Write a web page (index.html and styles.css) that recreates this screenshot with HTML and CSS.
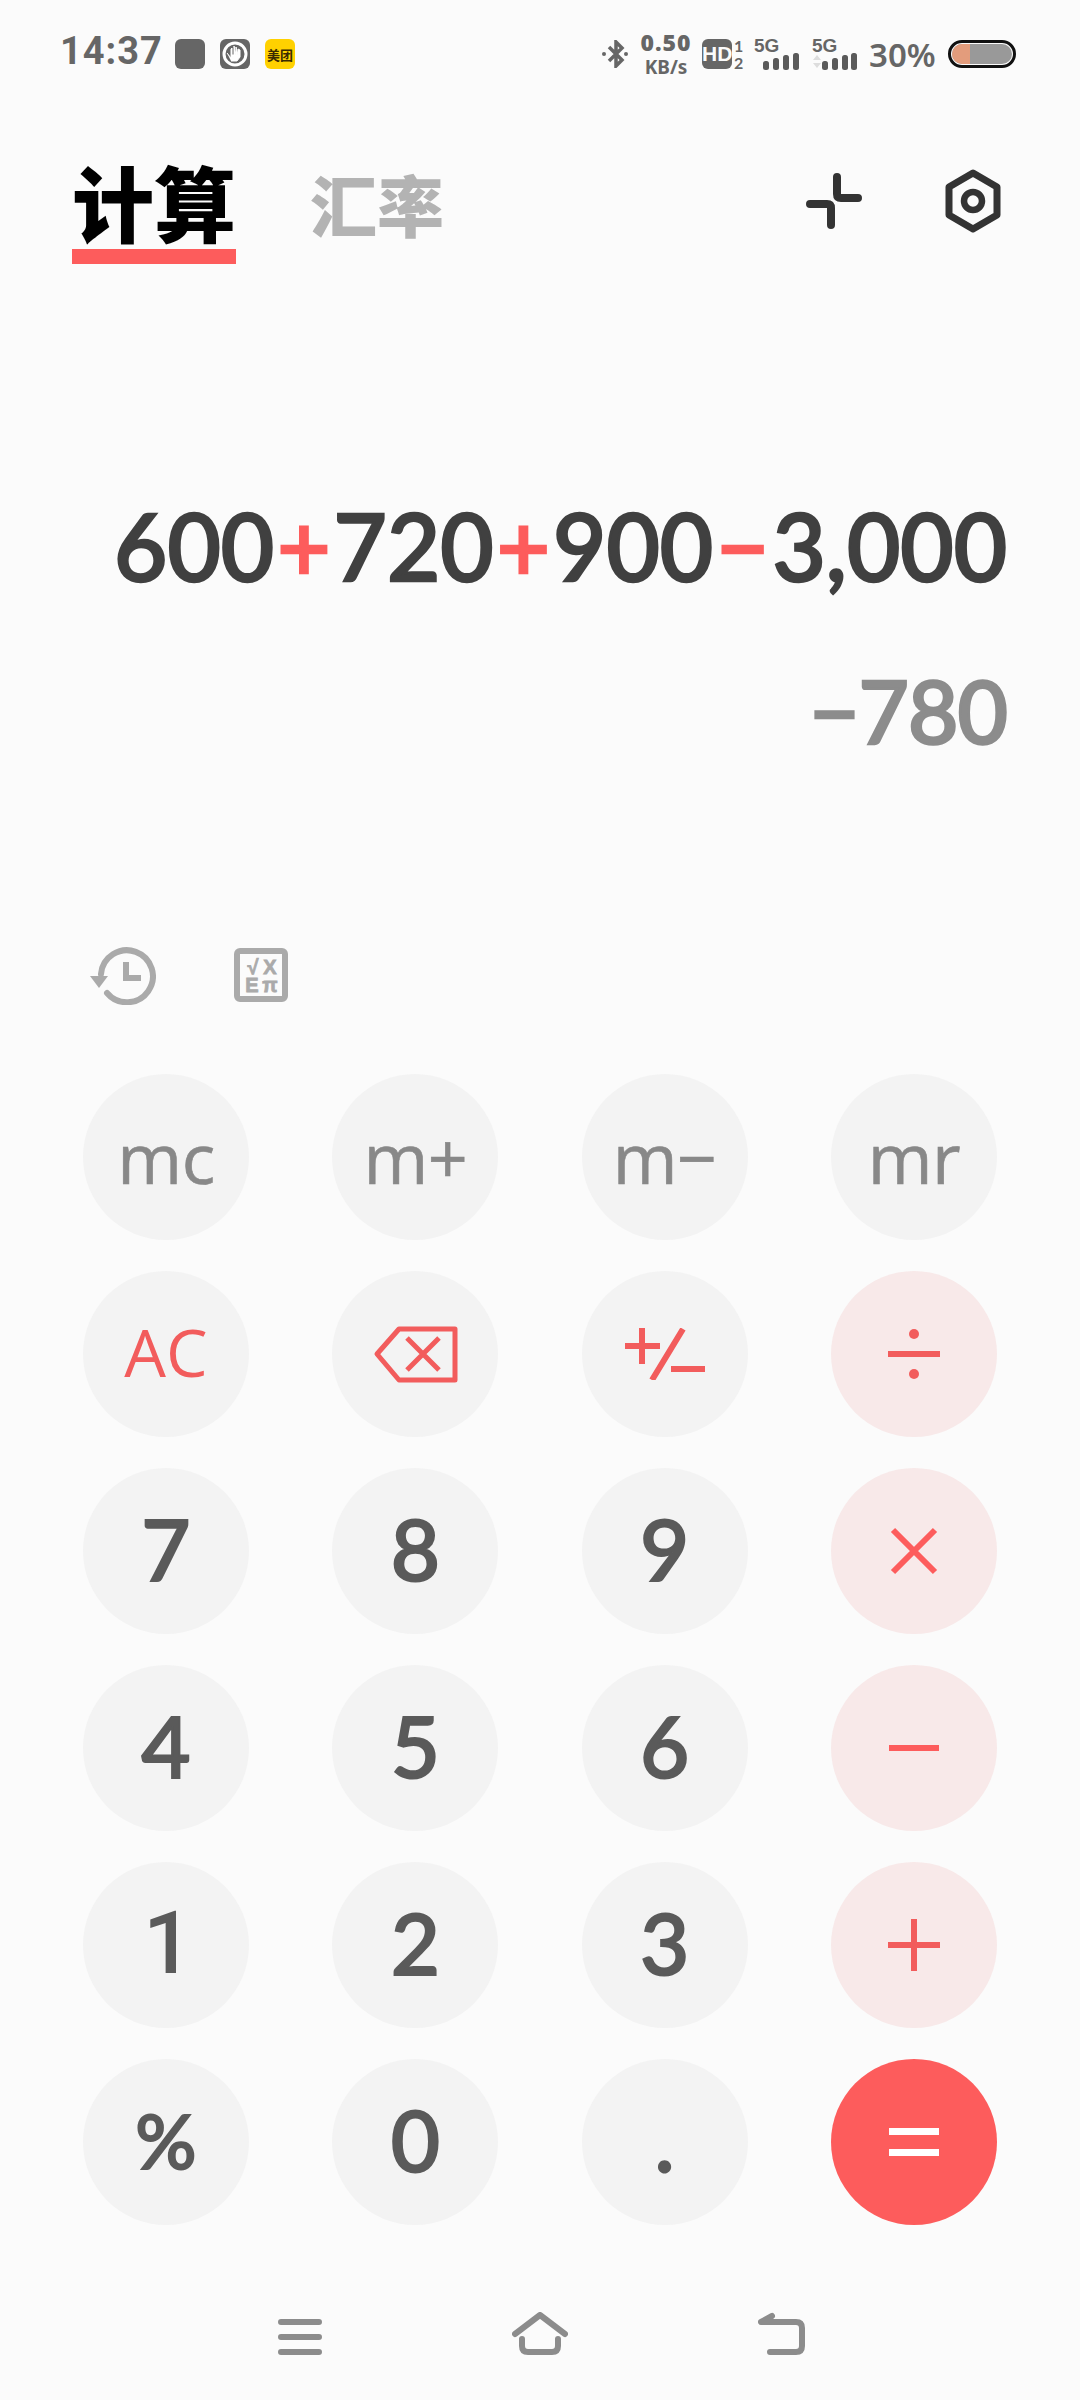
FILE: index.html
```html
<!DOCTYPE html>
<html lang="zh">
<head>
  <meta charset="UTF-8">
  <meta name="viewport" content="width=device-width, initial-scale=1.0">
  <title>计算器</title>
  <link rel="stylesheet" href="styles.css">
</head>
<body>
  <div class="status">
    <span class="time">14:37</span>
    <span class="app-icon gray"></span>
    <span class="app-icon gray">
      <svg viewBox="0 0 30 30" width="30" height="30"><circle cx="15" cy="15" r="11" fill="none" stroke="#fff" stroke-width="3"/><path d="M7 14l4 5V10l1-1v7l2 0V7l2 9V8l2 8V10l2 1v7l-3 4h-6" fill="#fff" stroke="#fff" stroke-width="1"/></svg>
    </span>
    <span class="app-icon yellow">美团</span>
    <span class="status-right">
      <svg class="bt" viewBox="0 0 26 28" width="26" height="28"><path d="M7 7l13 13-6 6V2l6 6L7 21" fill="none" stroke="#666" stroke-width="3.500"/><circle cx="2" cy="14" r="2" fill="#666"/><circle cx="24" cy="14" r="2" fill="#666"/></svg>
      <span class="speed"><b>0.50</b><i>KB/s</i></span>
      <span class="hd">HD</span>
      <span class="sim"><i>1</i><i>2</i></span>
      <span class="net">
        <span class="net-label">5G</span>
        <svg viewBox="0 0 36 17" width="36" height="17"><rect x="0" y="8" width="6" height="9" rx="2.5"/><rect x="10" y="5" width="6" height="12" rx="2.5"/><rect x="20" y="2" width="6" height="15" rx="2.5"/><rect x="30" y="0" width="6" height="17" rx="2.5"/></svg>
      </span>
      <span class="net net-two">
        <span class="net-label">5G</span>
        <svg viewBox="0 0 44 17" width="44" height="17"><path d="M0 7l4-5 4 5zM0 10l4 5 4-5z" fill="#ddd"/><rect x="9" y="8" width="6" height="9" rx="2.5"/><rect x="19" y="5" width="6" height="12" rx="2.5"/><rect x="29" y="2" width="6" height="15" rx="2.5"/><rect x="38" y="0" width="6" height="17" rx="2.5"/></svg>
      </span>
      <span class="percent">30%</span>
      <span class="battery"><span class="battery-in"><span class="battery-level"></span></span></span>
    </span>
  </div>

  <div class="header">
    <div class="tab active">计算</div>
    <div class="tab">汇率</div>
    <svg class="head-icon plus-icon" viewBox="0 0 56 56" width="56" height="56"><path d="M31 4V21Q31 25 35 25H52M4 31H21Q25 31 25 35V52" fill="none" stroke="#333" stroke-width="8" stroke-linecap="round"/></svg>
    <svg class="head-icon" viewBox="0 0 56 64" width="56" height="64"><path d="M28 4L52 18V46L28 60L4 46V18Z" fill="none" stroke="#333" stroke-width="7" stroke-linejoin="round"/><circle cx="28" cy="32" r="9" fill="none" stroke="#333" stroke-width="6.500"/></svg>
  </div>

  <div class="display">
    <div class="expr">600<span class="op">+</span>720<span class="op">+</span>900<span class="op">−</span>3,000</div>
    <div class="result">−780</div>
  </div>

  <div class="tools">
    <svg viewBox="0 0 66 60" width="66" height="60"><path d="M11 29A26 26 0 1 1 17 48" fill="none" stroke="#aaa" stroke-width="6" stroke-linecap="round"/><path d="M0 31H18L9 43Z" fill="#aaa"/><path d="M36 17V33H51" fill="none" stroke="#aaa" stroke-width="6"/></svg>
    <svg class="sci" viewBox="0 0 54 54" width="54" height="54"><rect x="3" y="3" width="48" height="48" rx="3" fill="none" stroke="#aaa" stroke-width="6"/><text x="19" y="26" class="sci-text">√</text><text x="36" y="26" class="sci-text">X</text><text x="18" y="44" class="sci-text">E</text><text x="36" y="44" class="sci-text">π</text></svg>
  </div>

  <div class="keypad">
    <div class="key mem">mc</div>
    <div class="key mem">m+</div>
    <div class="key mem">m−</div>
    <div class="key mem">mr</div>

    <div class="key red-text">AC</div>
    <div class="key"><svg viewBox="0 0 85 57" width="85" height="57"><path d="M26 3H82V54H26L4 28Z" fill="none" stroke="#f25c5c" stroke-width="5" stroke-linejoin="round"/><path d="M34 12L66 44M66 12L34 44" stroke="#f25c5c" stroke-width="5"/></svg></div>
    <div class="key"><svg viewBox="0 0 80 52" width="80" height="52"><path d="M0 18H35M17 0V36M58 1L27 52M46 41H80" fill="none" stroke="#f25c5c" stroke-width="6"/></svg></div>
    <div class="key op-key"><svg viewBox="0 0 52 52" width="52" height="52"><path d="M0 26H52" stroke="#f25c5c" stroke-width="6"/><circle cx="26" cy="6" r="5" fill="#f25c5c"/><circle cx="26" cy="46" r="5" fill="#f25c5c"/></svg></div>

    <div class="key">7</div>
    <div class="key">8</div>
    <div class="key">9</div>
    <div class="key op-key"><svg viewBox="0 0 48 48" width="48" height="48"><path d="M3 3L45 45M45 3L3 45" stroke="#fd5c5c" stroke-width="6"/></svg></div>

    <div class="key">4</div>
    <div class="key">5</div>
    <div class="key">6</div>
    <div class="key op-key"><svg viewBox="0 0 50 6" width="50" height="6"><path d="M0 3H50" stroke="#fd5c5c" stroke-width="6"/></svg></div>

    <div class="key one">1</div>
    <div class="key">2</div>
    <div class="key">3</div>
    <div class="key op-key"><svg viewBox="0 0 52 52" width="52" height="52"><path d="M0 26H52M26 0V52" stroke="#f25c5c" stroke-width="6"/></svg></div>

    <div class="key pct">%</div>
    <div class="key">0</div>
    <div class="key">.</div>
    <div class="key equals"><svg viewBox="0 0 50 28" width="50" height="28"><path d="M0 3.500H50M0 24.500H50" stroke="#fff" stroke-width="7"/></svg></div>
  </div>

  <div class="nav">
    <svg viewBox="0 0 44 43" width="44" height="43"><path d="M3 10H41M3 25H41M3 40H41" stroke="#8c8c8c" stroke-width="6" stroke-linecap="round"/></svg>
    <svg viewBox="0 0 56 43" width="56" height="43"><path d="M3 22L28 3L53 22" fill="none" stroke="#8c8c8c" stroke-width="6" stroke-linecap="round" stroke-linejoin="round"/><path d="M10 27V34Q10 40 16 40H40Q46 40 46 34V27" fill="none" stroke="#8c8c8c" stroke-width="6" stroke-linecap="round"/></svg>
    <svg viewBox="0 0 48 43" width="48" height="43"><path d="M14 4L3 10H38Q44 10 44 16V34Q44 40 38 40H12" fill="none" stroke="#8c8c8c" stroke-width="6" stroke-linecap="round" stroke-linejoin="round"/></svg>
  </div>
</body>
</html>
```

FILE: styles.css
```css
* {
  box-sizing: border-box;
}
body {
  margin: 0;
  width: 1080px;
  height: 2400px;
  overflow: hidden;
  background-color: #fbfbfb;
  font-family: 'Lato', 'Noto Sans CJK SC', sans-serif;
}

/* status bar */
.status {
  display: flex;
  align-items: center;
  height: 108px;
  padding-left: 60px;
  color: #666;
}
.time {
  width: 115px;
  margin-bottom: 6px;
  font-family: 'Roboto', sans-serif;
  font-size: 38px;
  font-weight: 700;
  letter-spacing: 1px;
}
.app-icon {
  display: flex;
  align-items: center;
  justify-content: center;
  width: 30px;
  height: 30px;
  margin-right: 15px;
  border-radius: 6px;
}
.app-icon.gray {
  background-color: #666;
}
.app-icon.yellow {
  background-color: #ffd100;
  color: #3a2a00;
  font-size: 13px;
  font-weight: 700;
  white-space: nowrap;
}
.status-right {
  display: flex;
  align-items: center;
  margin-left: 292px;
}
.speed {
  display: flex;
  flex-direction: column;
  align-items: center;
  width: 50px;
  margin-left: 13px;
  font-family: 'Noto Sans', sans-serif;
  font-weight: 700;
  line-height: 1;
}
.speed b {
  font-size: 23px;
  letter-spacing: 1px;
}
.speed i {
  margin-top: 4px;
  font-size: 19px;
  font-style: normal;
}
.hd {
  width: 30px;
  height: 30px;
  margin-left: 11px;
  border-radius: 6px;
  background-color: #666;
  color: #fbfbfb;
  font-family: 'Liberation Sans', sans-serif;
  font-size: 21px;
  font-weight: 700;
  line-height: 30px;
  text-align: center;
}
.sim {
  display: flex;
  flex-direction: column;
  width: 10px;
  margin-left: 2px;
  font-size: 16px;
  font-weight: 700;
  line-height: 17px;
}
.sim i {
  font-style: normal;
}
.net {
  display: flex;
  flex-direction: column;
  align-items: flex-end;
  width: 45px;
  margin-left: 10px;
}
.net svg {
  display: block;
  fill: #5a5a5a;
}
.net-label {
  align-self: flex-start;
  font-family: 'Liberation Sans', sans-serif;
  font-size: 19px;
  font-weight: 700;
  line-height: 14px;
}
.net-two {
  margin-left: 13px;
}
.percent {
  margin-left: 12px;
  font-family: 'Noto Sans', sans-serif;
  font-size: 33px;
  font-weight: 600;
}
.battery {
  width: 68px;
  height: 28px;
  margin-left: 12px;
  padding: 1px;
  border: 3px solid #111;
  border-radius: 14px;
}
.battery-in {
  display: block;
  height: 100%;
  overflow: hidden;
  border-radius: 10px;
  background-color: #999;
}
.battery-level {
  display: block;
  width: 30%;
  height: 100%;
  background-color: #e39c7c;
}

/* tabs */
.header {
  display: flex;
  align-items: flex-start;
  height: 182px;
  padding: 54px 79px 0 72px;
}
.tab {
  margin: 7px 0 0 74px;
  color: #b3b3b3;
  font-family: 'Noto Sans CJK SC', sans-serif;
  font-size: 67px;
  font-weight: 900;
  line-height: 68px;
}
.tab.active {
  margin: 0;
  padding: 0 0 10px;
  border-bottom: 15px solid #fd5c5c;
  color: #000;
  font-size: 82px;
  line-height: 77px;
}
.head-icon {
  margin: 7px 0 0 83px;
}
.plus-icon {
  margin: 11px 0 0 auto;
}

/* display */
.display {
  height: 655px;
  padding: 196px 73px 0 0;
  text-align: right;
}
.expr {
  color: #404040;
  font-size: 92px;
  font-weight: 500;
  line-height: 120px;
  white-space: nowrap;
  -webkit-text-stroke: 2.500px #404040;
}
.op {
  margin: 0 3px;
  color: #fd5c5c;
  -webkit-text-stroke: 2.500px #fd5c5c;
}
.result {
  margin-top: 50px;
  color: #8c8c8c;
  font-size: 87px;
  font-weight: 500;
  letter-spacing: -1px;
  line-height: 110px;
  -webkit-text-stroke: 2.500px #8c8c8c;
}

/* tools */
.tools {
  display: flex;
  align-items: flex-start;
  height: 129px;
  padding-left: 90px;
}
.sci {
  margin: 3px 0 0 78px;
}
.sci-text {
  fill: #aaa;
  stroke: #aaa;
  stroke-width: 0.8;
  font-family: 'Liberation Sans', sans-serif;
  font-size: 20px;
  font-weight: 700;
  text-anchor: middle;
}

/* keys */
.keypad {
  display: grid;
  grid-template-columns: repeat(4, 166px);
  grid-auto-rows: 166px;
  column-gap: 83.3px;
  row-gap: 31px;
  padding-left: 83px;
}
.key {
  display: flex;
  align-items: center;
  justify-content: center;
  padding-bottom: 6px;
  border-radius: 50%;
  background-color: #f3f3f3;
  color: #5a5a5a;
  font-size: 85px;
  font-weight: 500;
  -webkit-text-stroke: 2px #5a5a5a;
}
.key svg {
  margin-bottom: -6px;
}
.one {
  padding-left: 4px;
  font-family: 'Roboto', sans-serif;
  font-size: 88px;
  -webkit-text-stroke: 0;
}
.mem {
  padding-bottom: 1px;
  color: #888;
  font-family: 'Open Sans', sans-serif;
  font-size: 70px;
  font-weight: 400;
  letter-spacing: -0.5px;
  -webkit-text-stroke: 0.6px #888;
}
.red-text {
  color: #f25c5c;
  font-family: 'Open Sans', sans-serif;
  font-size: 66px;
  font-weight: 400;
  -webkit-text-stroke: 0;
}
.pct {
  font-size: 76px;
}
.op-key {
  background-color: #f8e9e9;
}
.equals {
  background-color: #fd5c5c;
}

/* nav bar */
.nav {
  display: flex;
  align-items: flex-start;
  gap: 190px;
  padding: 87px 0 0 278px;
}
```
